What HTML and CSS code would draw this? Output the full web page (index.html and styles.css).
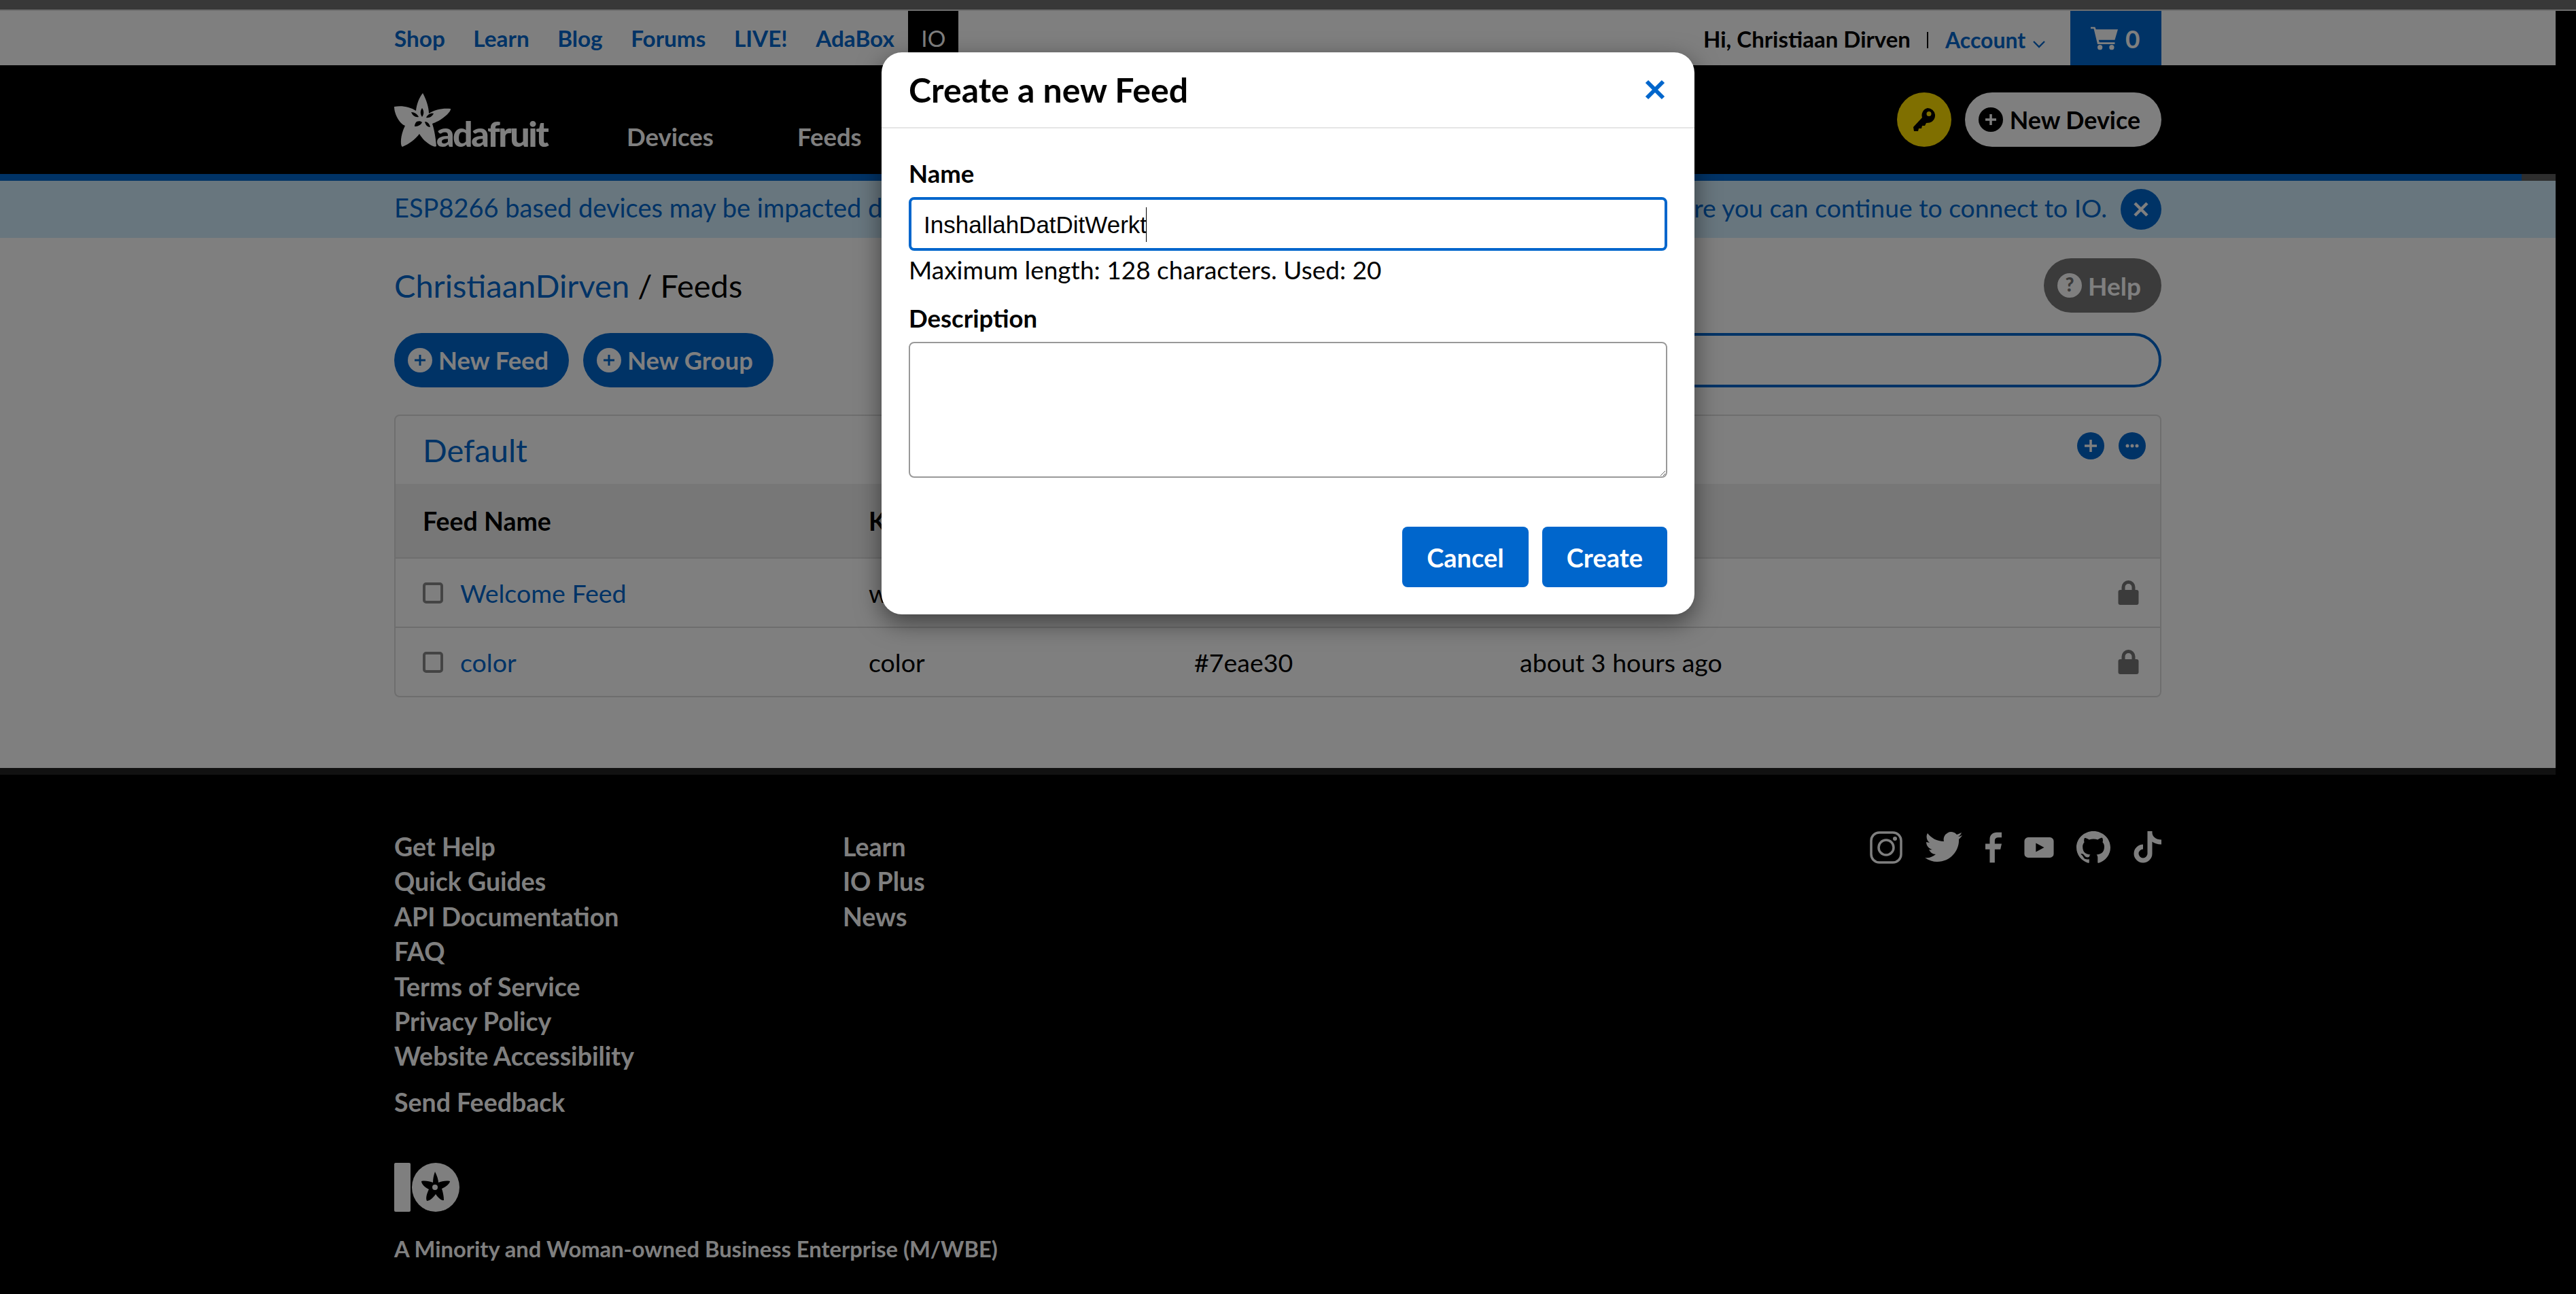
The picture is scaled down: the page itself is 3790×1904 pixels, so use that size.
FILE: index.html
```html
<!DOCTYPE html>
<html lang="en">
<head>
  <meta charset="UTF-8" />
  <title>Adafruit IO - Feeds</title>
  <link rel="stylesheet" href="styles.css">
</head>
<body>
  <div class="browser-strip"></div>

  <div class="page">
    <div class="topbar">
      <div class="wrap topbar-row">
        <nav class="topnav">
          <a href="#">Shop</a>
          <a href="#">Learn</a>
          <a href="#">Blog</a>
          <a href="#">Forums</a>
          <a href="#">LIVE!</a>
          <a href="#">AdaBox</a>
          <a href="#" class="io-tab">IO</a>
        </nav>
        <div class="account">
          <span class="hello">Hi, Christiaan Dirven</span>
          <span class="sep"></span>
          <a href="#" class="account-link">Account
            <svg width="20" height="12" viewBox="0 0 20 12"><path d="M2 2l8 8 8-8" fill="none" stroke="#06c" stroke-width="2.400"/></svg>
          </a>
          <a href="#" class="cart">
            <svg width="40" height="36" viewBox="0 0 44 38"><path fill="#fff" d="M0 1h7l1.500 4H44l-5 17H13l1 4h25v3H11L5 4H0z"/><circle cx="15" cy="34" r="4" fill="#fff"/><circle cx="34" cy="34" r="4" fill="#fff"/></svg>
            <span>0</span>
          </a>
        </div>
      </div>
    </div>

    <header class="mainbar">
      <div class="wrap mainbar-row">
        <a href="#" class="logo">
          <svg class="flower" width="84" height="80" viewBox="0 0 84 80">
            <path fill="#fff" d="M42 0c5 9 9 21 9 30 9-6 20-8 32-7 1 3-7 12-18 18-4 2-7 3-9 4 3 9 5 21 6 33-2 3-13-3-20-11-2-3-4-5-5-7-6 8-15 15-25 19-3-1-3-13 1-24 1-3 2-5 3-7C8 45 0 31 0 20c11-2 23 0 32 6 1-10 5-20 10-26z"/>
            <path fill="#000" d="M41 22c3 4 3 9 0 13-3-4-3-9 0-13zM25 28c5 0 9 3 11 7-5 1-9-2-11-7zM58 30c-2 4-6 7-11 6 2-4 6-7 11-6zM33 42c3-1 6-1 8 1-2 4-6 6-11 6 0-3 1-5 3-7zM45 42c4 0 7 3 8 8-4 0-7-3-8-8z"/>
          </svg>
          <span class="wordmark">adafruit</span>
        </a>
        <nav class="mainnav">
          <a href="#">Devices</a>
          <a href="#">Feeds</a>
        </nav>
        <div class="main-actions">
          <a href="#" class="key-btn">
            <svg width="34" height="36" viewBox="0 0 34 36"><path fill="#000" fill-rule="evenodd" d="M22 1a11 11 0 0 1 3 21.600L20 23l-2 4h-4l-1 4H9l-1 4H2L1 29l13-14A11 11 0 0 1 22 1zm2 5a3.500 3.500 0 1 0 0 7 3.500 3.500 0 0 0 0-7z"/></svg>
          </a>
          <a href="#" class="device-btn">
            <svg width="36" height="36" viewBox="0 0 36 36"><circle cx="18" cy="18" r="18" fill="#000"/><path d="M18 10v16M10 18h16" stroke="#fff" stroke-width="3.500"/></svg>
            New Device
          </a>
        </div>
      </div>
    </header>

    <div class="blue-rule"></div>

    <div class="notice">
      <div class="wrap notice-row">
        <span class="notice-text">ESP8266 based devices may be impacted due</span>
        <span class="notice-text notice-end">before you can continue to connect to IO.</span>
        <a href="#" class="notice-close">
          <svg width="26" height="26" viewBox="0 0 26 26"><path d="M4 4l18 18M22 4L4 22" stroke="#fff" stroke-width="4.500"/></svg>
        </a>
      </div>
    </div>

    <main class="content">
      <div class="wrap">
        <div class="crumb-row">
          <h2 class="crumbs"><a href="#">ChristiaanDirven</a> / Feeds</h2>
          <a href="#" class="help-btn">
            <svg width="36" height="36" viewBox="0 0 36 36"><circle cx="18" cy="18" r="18" fill="#fff"/><text x="18" y="27" text-anchor="middle" class="help-mark">?</text></svg>
            Help
          </a>
        </div>

        <div class="tools-row">
          <a href="#" class="pill">
            <svg width="36" height="36" viewBox="0 0 36 36"><circle cx="18" cy="18" r="18" fill="#fff"/><path d="M18 10v16M10 18h16" stroke="#06c" stroke-width="3"/></svg>
            New Feed
          </a>
          <a href="#" class="pill">
            <svg width="36" height="36" viewBox="0 0 36 36"><circle cx="18" cy="18" r="18" fill="#fff"/><path d="M18 10v16M10 18h16" stroke="#06c" stroke-width="3"/></svg>
            New Group
          </a>
          <div class="search"></div>
        </div>

        <section class="group">
          <div class="group-head">
            <h3><a href="#">Default</a></h3>
            <div class="group-tools">
              <span class="round-btn"><svg width="18" height="18" viewBox="0 0 18 18"><path d="M9 0v18M0 9h18" stroke="#fff" stroke-width="3.500"/></svg></span>
              <span class="round-btn"><svg width="20" height="6" viewBox="0 0 20 6"><circle cx="3" cy="3" r="2.500" fill="#fff"/><circle cx="10" cy="3" r="2.500" fill="#fff"/><circle cx="17" cy="3" r="2.500" fill="#fff"/></svg></span>
            </div>
          </div>
          <div class="feed-row feed-head">
            <div>Feed Name</div>
            <div>Key</div>
            <div>Last value</div>
            <div>Recorded</div>
            <div></div>
          </div>
          <div class="feed-row">
            <div class="name-cell"><span class="check"></span><a href="#">Welcome Feed</a></div>
            <div>welcome-feed</div>
            <div></div>
            <div></div>
            <div class="lock-cell">
              <svg width="31" height="36" viewBox="0 0 30 36"><path fill="#777" d="M3 14h24a3 3 0 0 1 3 3v16a3 3 0 0 1-3 3H3a3 3 0 0 1-3-3V17a3 3 0 0 1 3-3z"/><path d="M7.500 15V10a7.500 7.500 0 0 1 15 0v5" fill="none" stroke="#777" stroke-width="5"/></svg>
            </div>
          </div>
          <div class="feed-row">
            <div class="name-cell"><span class="check"></span><a href="#">color</a></div>
            <div>color</div>
            <div>#7eae30</div>
            <div>about 3 hours ago</div>
            <div class="lock-cell">
              <svg width="31" height="36" viewBox="0 0 30 36"><path fill="#777" d="M3 14h24a3 3 0 0 1 3 3v16a3 3 0 0 1-3 3H3a3 3 0 0 1-3-3V17a3 3 0 0 1 3-3z"/><path d="M7.500 15V10a7.500 7.500 0 0 1 15 0v5" fill="none" stroke="#777" stroke-width="5"/></svg>
            </div>
          </div>
        </section>
      </div>
    </main>

    <div class="footer-rule"></div>

    <footer class="footer">
      <div class="wrap">
        <div class="footer-top">
          <ul class="footer-col">
            <li><a href="#">Get Help</a></li>
            <li><a href="#">Quick Guides</a></li>
            <li><a href="#">API Documentation</a></li>
            <li><a href="#">FAQ</a></li>
            <li><a href="#">Terms of Service</a></li>
            <li><a href="#">Privacy Policy</a></li>
            <li><a href="#">Website Accessibility</a></li>
            <li class="feedback"><a href="#">Send Feedback</a></li>
          </ul>
          <ul class="footer-col">
            <li><a href="#">Learn</a></li>
            <li><a href="#">IO Plus</a></li>
            <li><a href="#">News</a></li>
          </ul>
          <div class="social">
            <svg width="48" height="48" viewBox="0 0 48 48"><rect x="2" y="2" width="44" height="44" rx="12" fill="none" stroke="#fff" stroke-width="3.500"/><circle cx="24" cy="24" r="11" fill="none" stroke="#fff" stroke-width="3.500"/><circle cx="37" cy="11" r="3" fill="#fff"/></svg>
            <svg width="56" height="48" viewBox="0 0 56 48"><path fill="#fff" d="M55 6c-2 1-4 2-6 2 2-1 4-3 5-6-2 1-4 2-7 3a11 11 0 0 0-19 10C18 15 9 10 4 3c-3 5-1 11 3 14-2 0-3-1-5-1 0 5 4 10 9 11-2 0-3 1-5 0 2 4 5 7 10 7-5 4-10 6-16 5 6 4 12 6 18 6 21 0 33-18 32-33 2-2 4-4 5-6z"/></svg>
            <svg width="24" height="48" viewBox="0 0 26 48"><path fill="#fff" d="M7 48V27H0v-9h7v-7C7 4 12 0 18 0h8v8h-5c-4 0-6 2-6 5v5h11l-2 9h-9v21z"/></svg>
            <svg width="44" height="30" viewBox="0 0 46 32"><path fill="#fff" fill-rule="evenodd" d="M6 0h34a6 6 0 0 1 6 6v20a6 6 0 0 1-6 6H6a6 6 0 0 1-6-6V6a6 6 0 0 1 6-6zm12 9v14l13-7z"/></svg>
            <svg width="50" height="48" viewBox="0 0 16 16" preserveAspectRatio="none"><path fill="#fff" d="M8 0C3.580 0 0 3.580 0 8c0 3.540 2.290 6.530 5.470 7.590.4.070.55-.17.55-.38 0-.19-.01-.82-.01-1.490-2.010.37-2.530-.49-2.690-.94-.09-.23-.48-.94-.82-1.130-.28-.15-.68-.52-.01-.53.63-.01 1.080.58 1.230.82.72 1.210 1.870.87 2.330.66.070-.52.28-.87.51-1.070-1.780-.2-3.640-.89-3.640-3.950 0-.87.31-1.590.82-2.150-.08-.2-.36-1.020.08-2.120 0 0 .67-.21 2.200.82.64-.18 1.320-.27 2-.27.68 0 1.360.09 2 .27 1.530-1.040 2.200-.82 2.200-.82.44 1.100.16 1.920.08 2.120.51.56.82 1.270.82 2.150 0 3.070-1.870 3.750-3.650 3.950.29.25.54.73.54 1.480 0 1.070-.01 1.930-.01 2.200 0 .21.15.46.55.38A8.013 8.013 0 0 0 16 8c0-4.420-3.580-8-8-8z"/></svg>
            <svg width="42" height="48" viewBox="0 0 42 48"><path fill="none" stroke="#fff" stroke-width="7" d="M25 0v33a10 10 0 1 1-10-10M25 2c0 8 7 14 17 14"/></svg>
          </div>
        </div>

        <svg class="io-logo" width="96" height="72" viewBox="0 0 96 72">
          <rect width="24" height="72" rx="2" fill="#fff"/>
          <ellipse cx="61" cy="36" rx="35" ry="36" fill="#fff"/>
          <path fill="#000" d="M60 13c3 6 5 12 5 16 5-2 11-3 17-2 0 3-5 8-12 11 2 6 3 12 3 17-3 1-8-3-12-9-4 6-9 10-13 10-2-4 0-11 3-17-6-3-11-8-11-12 5-1 12 0 17 2 0-5 1-11 3-16z"/>
          <circle cx="60" cy="36" r="4" fill="#fff"/>
        </svg>
        <p class="mwbe">A Minority and Woman-owned Business Enterprise (M/WBE)</p>
      </div>
    </footer>
  </div>

  <div class="backdrop"></div>

  <div class="modal">
    <div class="modal-head">
      <h4>Create a new Feed</h4>
      <a href="#" class="modal-close">
        <svg width="30" height="30" viewBox="0 0 30 30"><path d="M3 3l24 24M27 3L3 27" stroke="#06c" stroke-width="6"/></svg>
      </a>
    </div>
    <div class="modal-body">
      <label class="field-label">Name</label>
      <div class="name-input"><span>InshallahDatDitWerkt</span><i class="caret"></i></div>
      <p class="hint">Maximum length: 128 characters. Used: 20</p>
      <label class="field-label">Description</label>
      <textarea class="desc-input"></textarea>
      <div class="modal-actions">
        <button>Cancel</button>
        <button>Create</button>
      </div>
    </div>
  </div>
</body>
</html>
```
FILE: styles.css
```css
* {
  box-sizing: border-box;
}
html, body {
  margin: 0;
  padding: 0;
  background: #000;
}
body {
  position: relative;
  height: 1904px;
  overflow: hidden;
  font-family: Lato, "Open Sans", sans-serif;
  color: #000;
}
a {
  color: #06c;
  text-decoration: none;
}
ul {
  list-style: none;
  margin: 0;
  padding: 0;
}
.browser-strip {
  height: 16px;
  background: #707070;
  border-bottom: 2px solid #ddd;
}
.page {
  width: 3760px;
}
.wrap {
  width: 2600px;
  margin-left: 580px;
}

/* top links */
.topbar {
  height: 80px;
  background: #fff;
}
.topbar-row {
  display: flex;
  justify-content: space-between;
  height: 80px;
}
.topnav {
  display: flex;
  align-items: center;
  gap: 41.500px;
  font-size: 33.300px;
  font-weight: 700;
}
.io-tab {
  display: flex;
  align-items: center;
  justify-content: center;
  width: 74px;
  height: 80px;
  margin-left: -21px;
  background: #000;
  color: #fff;
  font-weight: 400;
}
.account {
  display: flex;
  align-items: center;
  font-size: 33px;
  font-weight: 700;
}
.hello {
  padding-top: 2px;
}
.sep {
  width: 2px;
  height: 24px;
  margin: 6px 25px 0 24px;
  background: #000;
}
.account-link {
  padding-top: 4px;
  font-size: 32px;
}
.account-link svg {
  margin-left: 2px;
}
.cart {
  display: flex;
  align-items: center;
  gap: 11px;
  width: 134px;
  height: 80px;
  margin-left: 36px;
  padding-left: 30px;
  background: #06c;
  color: #fff;
  font-size: 37px;
}

/* logo bar */
.mainbar {
  height: 160px;
  background: #000;
}
.mainbar-row {
  display: flex;
  align-items: center;
  height: 160px;
}
.logo {
  position: relative;
  display: block;
  width: 230px;
  height: 80px;
  margin-top: 2px;
}
.flower {
  display: block;
}
.wordmark {
  position: absolute;
  left: 62px;
  top: 28px;
  color: #fff;
  font-size: 52px;
  font-weight: 900;
  letter-spacing: -2.500px;
}
.mainnav {
  display: flex;
  gap: 123px;
  margin-left: 112px;
  margin-top: 50px;
  font-size: 36.500px;
  font-weight: 700;
}
.mainnav a {
  color: #fff;
}
.main-actions {
  display: flex;
  align-items: center;
  gap: 20px;
  margin-left: auto;
}
.key-btn {
  display: flex;
  align-items: center;
  justify-content: center;
  width: 80px;
  height: 80px;
  border-radius: 50%;
  background: #ffde00;
}
.device-btn {
  display: flex;
  align-items: center;
  gap: 10px;
  height: 80px;
  padding: 0 31px 0 20px;
  border-radius: 40px;
  background: #fff;
  color: #000;
  font-size: 35.800px;
  font-weight: 700;
}
.blue-rule {
  height: 10px;
  background: linear-gradient(to right, #06c 3710px, #5c5c5c 3710px);
}
.notice {
  height: 84px;
  background: #d0ecfc;
}
.notice-row {
  display: flex;
  align-items: center;
  height: 84px;
  font-size: 38px;
  color: #06c;
}
.notice-text {
  padding-bottom: 6px;
  white-space: nowrap;
}
.notice-end {
  margin-left: auto;
  margin-right: 20px;
  font-size: 37.300px;
}
.notice-close {
  display: flex;
  align-items: center;
  justify-content: center;
  width: 60px;
  height: 60px;
  border-radius: 50%;
  background: #06c;
}

/* feeds content */
.content {
  height: 780px;
  padding-top: 30px;
  background: #fff;
}
.crumb-row {
  display: flex;
  align-items: center;
  justify-content: space-between;
  height: 80px;
}
.crumbs {
  margin: 0;
  font-size: 47px;
  font-weight: 400;
}
.help-btn {
  display: flex;
  align-items: center;
  gap: 9px;
  height: 80px;
  padding: 0 30px 0 20px;
  border-radius: 40px;
  background: #777;
  color: #fff;
  font-size: 37px;
  font-weight: 700;
}
.help-mark {
  fill: #777;
  font-size: 28px;
  font-weight: 900;
}
.tools-row {
  display: flex;
  align-items: center;
  gap: 21px;
  margin-top: 30px;
}
.pill {
  display: flex;
  align-items: center;
  gap: 9px;
  height: 80px;
  padding: 0 30px 0 20px;
  border-radius: 40px;
  background: #06c;
  color: #fff;
  font-size: 36.300px;
  font-weight: 700;
}
.search {
  width: 1400px;
  height: 80px;
  margin-left: auto;
  border: 4px solid #06c;
  border-radius: 40px;
}
.group {
  margin-top: 40px;
  border: 2px solid #ddd;
  border-radius: 8px;
}
.group-head {
  display: flex;
  justify-content: space-between;
  height: 100px;
  padding: 0 21px 0 40px;
}
.group-head h3 {
  margin: 0;
  font-size: 47px;
  font-weight: 400;
  line-height: 100px;
}
.group-tools {
  display: flex;
  gap: 21px;
  padding-top: 24px;
}
.round-btn {
  display: flex;
  align-items: center;
  justify-content: center;
  width: 40px;
  height: 40px;
  border-radius: 50%;
  background: #06c;
}
.feed-row {
  display: grid;
  grid-template-columns: 656px 479px 479px 1fr 60px;
  align-items: center;
  height: 102px;
  padding: 0 31px 0 40px;
  border-top: 2px solid #ddd;
  font-size: 37.500px;
}
.feed-head {
  height: 108px;
  border-top: 0;
  background: #eee;
  font-weight: 700;
}
.name-cell {
  display: flex;
  align-items: center;
  gap: 25px;
}
.check {
  width: 30px;
  height: 31px;
  border: 4px solid #888;
  border-radius: 5px;
  background: #fff;
}
.lock-cell {
  display: flex;
  justify-content: flex-end;
}

/* footer */
.footer-rule {
  height: 10px;
  background: #222;
}
.footer {
  background: #000;
  color: #fff;
}
.footer-top {
  display: flex;
  padding-top: 80px;
}
.footer-col {
  width: 660px;
  font-size: 37.500px;
  font-weight: 700;
}
.footer-col li {
  height: 51.400px;
  line-height: 51.400px;
}
.footer-col a {
  color: #fff;
}
.feedback {
  margin-top: 16.600px;
}
.social {
  display: flex;
  align-items: center;
  gap: 33px;
  height: 48px;
  margin-top: 3px;
  margin-left: auto;
}
.io-logo {
  display: block;
  margin-top: 63px;
}
.mwbe {
  margin: 35px 0 0;
  font-size: 32.700px;
  font-weight: 700;
  line-height: 40px;
}

/* modal over everything */
.backdrop {
  position: absolute;
  top: 0;
  left: 0;
  width: 100%;
  height: 100%;
  background: rgba(0, 0, 0, 0.5);
}
.modal {
  position: absolute;
  top: 77px;
  left: 1297px;
  width: 1196px;
  height: 827px;
  border-radius: 30px;
  background: #fff;
  box-shadow: 0 12px 36px rgba(0, 0, 0, 0.5);
}
.modal-head {
  display: flex;
  align-items: center;
  justify-content: space-between;
  height: 112px;
  padding: 0 43px 0 40px;
  border-bottom: 2px solid #e6e6e6;
}
.modal-head h4 {
  margin: 0;
  font-size: 50px;
  font-weight: 700;
}
.modal-close {
  display: flex;
}
.modal-body {
  padding: 45px 40px 0;
}
.field-label {
  display: block;
  font-size: 36.500px;
  font-weight: 700;
  line-height: 42px;
}
.name-input {
  display: flex;
  align-items: center;
  height: 79px;
  margin-top: 14px;
  padding: 2px 0 0 18px;
  border: 4px solid #06c;
  border-radius: 8px;
  font-family: "Liberation Sans", Arial, sans-serif;
  font-size: 35px;
}
.caret {
  width: 1px;
  height: 51px;
  margin-left: -1px;
  background: #000;
}
.hint {
  margin: 7px 0 29px;
  font-size: 37px;
  line-height: 42px;
}
.desc-input {
  display: block;
  width: 100%;
  height: 200px;
  margin-top: 14px;
  border: 2px solid #999;
  border-radius: 8px;
  outline: none;
}
.modal-actions {
  display: flex;
  justify-content: flex-end;
  gap: 20px;
  margin-top: 72px;
}
.modal-actions button {
  height: 89px;
  padding: 0 36px;
  border: none;
  border-radius: 8px;
  background: #06c;
  color: #fff;
  font-family: Lato, sans-serif;
  font-size: 38px;
  font-weight: 700;
}
```
